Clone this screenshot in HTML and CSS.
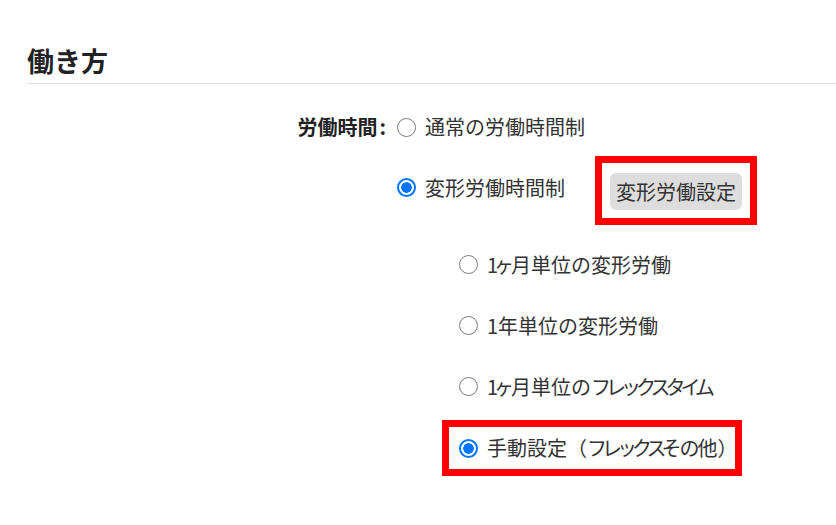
FILE: index.html
```html
<!DOCTYPE html>
<html lang="ja">
<head>
<meta charset="utf-8">
<title>働き方</title>
<link rel="stylesheet" href="styles.css">
</head>
<body>
<section class="section">
  <h2 class="section-title">働き方</h2>
  <div class="form">
    <div class="form-label">労働時間<span class="colon">:</span></div>
    <div class="form-options">
      <label class="option option-top">
        <input type="radio" name="worktime" class="radio">
        <span>通常の労働時間制</span>
      </label>
      <div class="option-row">
        <label class="option">
          <input type="radio" name="worktime" class="radio" checked>
          <span>変形労働時間制</span>
        </label>
        <div class="highlight highlight-button">
          <button type="button" class="btn">変形労働設定</button>
        </div>
      </div>
      <div class="sub-options">
        <label class="option sub-option">
          <input type="radio" name="henkei" class="radio">
          <span><span class="num">1</span><span class="ke">ヶ</span>月単位の変形労働</span>
        </label>
        <label class="option sub-option">
          <input type="radio" name="henkei" class="radio">
          <span>1年単位の変形労働</span>
        </label>
        <label class="option sub-option">
          <input type="radio" name="henkei" class="radio">
          <span><span class="num">1</span><span class="ke">ヶ</span>月単位の<span class="kana">フレックスタイム</span></span>
        </label>
        <div class="highlight highlight-option">
          <label class="option">
            <input type="radio" name="henkei" class="radio" checked>
            <span>手動設定（<span class="kana">フレックス</span><span class="hira">その</span>他）</span>
          </label>
        </div>
      </div>
    </div>
  </div>
</section>
</body>
</html>
```

FILE: styles.css
```css
html, body {
  margin: 0;
  padding: 0;
  background: #ffffff;
}

body {
  font-family: "Noto Sans CJK JP", "Noto Sans", sans-serif;
  color: #333333;
  font-size: 20px;
}

.section {
  margin-left: 27px;
}

.section-title {
  margin: 43px 0 0 0;
  padding-bottom: 4px;
  font-size: 27px;
  line-height: 36px;
  font-weight: 700;
  color: #222222;
  border-bottom: 1px solid #dddddd;
}

.form {
  display: grid;
  grid-template-columns: 359px 1fr;
  column-gap: 11px;
  margin-top: 26px;
}

.form-label {
  text-align: right;
  font-weight: 700;
  color: #222222;
  height: 34px;
  line-height: 34px;
}

.colon {
  margin-left: 2px;
}

.form-options {
  display: flex;
  flex-direction: column;
}

.option {
  display: flex;
  align-items: center;
  gap: 9px;
  line-height: 24px;
  white-space: nowrap;
}

.num {
  letter-spacing: -4px;
}

.ke {
  letter-spacing: -3px;
}

.kana {
  letter-spacing: -5px;
}

.hira {
  letter-spacing: -2px;
}

.option-top {
  height: 34px;
}

.radio {
  -webkit-appearance: none;
  appearance: none;
  width: 19px;
  height: 19px;
  min-width: 19px;
  margin: 0;
  flex: none;
  border-radius: 50%;
  border: 1.5px solid #7a7a7a;
  background: #ffffff;
  box-sizing: border-box;
}

.radio:checked {
  border: 2px solid #0075ff;
  background: radial-gradient(circle, #0075ff 0 5px, #ffffff 5.5px);
}

.option-row {
  display: flex;
  align-items: center;
  gap: 30px;
  margin-top: 12px;
}

.option-row > .option {
  margin-top: -6px;
}

.highlight {
  border: 7px solid #ff0000;
}

.highlight-button {
  padding: 10px 8px 8px 8px;
}

.btn {
  font-family: inherit;
  font-size: 20px;
  color: #333333;
  background: #dddddd;
  border: none;
  border-radius: 6px;
  height: 37px;
  padding: 0 6px;
  line-height: 37px;
}

.sub-options {
  display: flex;
  flex-direction: column;
  margin-top: 9px;
}

.sub-option {
  height: 61px;
  padding-left: 62px;
}

.highlight-option {
  align-self: flex-start;
  box-sizing: border-box;
  width: 300px;
  margin-top: 3px;
  margin-left: 45px;
  height: 56px;
  padding: 0 0 0 10px;
  display: flex;
  align-items: center;
  overflow: hidden;
}
```
